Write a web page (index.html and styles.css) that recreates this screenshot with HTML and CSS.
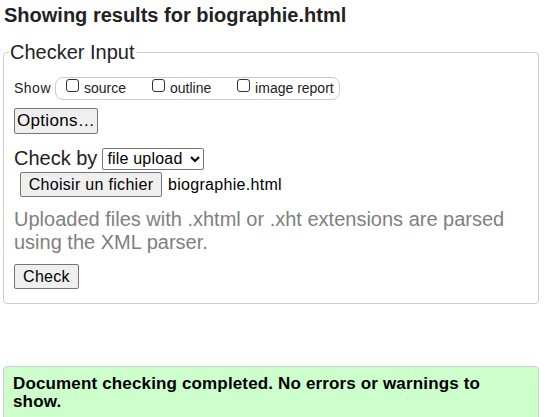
FILE: index.html
```html
<!DOCTYPE html>
<html lang="en">
<head>
<meta charset="utf-8">
<title>Showing results for biographie.html</title>
<link rel="stylesheet" href="styles.css">
</head>
<body>
<h2 class="title">Showing results for biographie.html</h2>
<fieldset class="checker">
  <legend class="checker-legend">Checker Input</legend>
  <div class="show-row">
    <span class="show-label">Show</span>
    <span class="show-box">
      <label class="opt"><input type="checkbox" class="cb">source</label>
      <label class="opt"><input type="checkbox" class="cb">outline</label>
      <label class="opt"><input type="checkbox" class="cb">image report</label>
    </span>
  </div>
  <div class="options-row"><button class="btn btn-options">Options…</button></div>
  <div class="checkby-row">
    <span class="checkby-label">Check by</span>
    <select class="sel"><option>file upload</option></select>
  </div>
  <div class="file-row">
    <button class="btn btn-file">Choisir un fichier</button>
    <span class="file-name">biographie.html</span>
  </div>
  <p class="note">Uploaded files with .xhtml or .xht extensions are parsed using the XML parser.</p>
  <div class="check-row"><button class="btn btn-check">Check</button></div>
</fieldset>
<div class="result">Document checking completed. No errors or warnings to show.</div>
</body>
</html>
```
FILE: styles.css
```css
html, body {
  margin: 0;
  padding: 0;
  background: #fff;
}
body {
  font-family: "Liberation Sans", Arial, sans-serif;
  color: #222;
  padding: 4px 6px 0 3px;
}
.title {
  font-size: 20px;
  font-weight: bold;
  margin: 0;
  padding: 0 0 0 1px;
  line-height: 23px;
  color: #222;
}
.checker {
  margin: 14px 0 0 0;
  padding: 0 10px 14px 10px;
  border: 1px solid #ccc;
  border-radius: 4px;
  min-width: 0;
}
.checker-legend {
  font-size: 20px;
  padding: 0 1px;
  margin-left: -5px;
  line-height: 23px;
  color: #222;
}
.show-row {
  display: flex;
  align-items: center;
  margin-top: 13px;
  height: 23px;
  font-size: 14px;
  line-height: 21px;
}
.show-label {
  margin-right: 4px;
  letter-spacing: 0.5px;
}
.show-box {
  display: block;
  border: 1px solid #ccc;
  border-radius: 8px;
  height: 21px;
  padding: 0 5px 0 10px;
  white-space: nowrap;
}
.opt {
  margin-right: 22px;
  color: #222;
}
.opt:last-child { margin-right: 0; }
.cb {
  -webkit-appearance: none;
  appearance: none;
  box-sizing: border-box;
  display: inline-block;
  margin: 0 5px 1px 0;
  width: 13px;
  height: 13px;
  border: 1px solid #333;
  border-radius: 3px;
  background: #fff;
  vertical-align: baseline;
}
.options-row {
  margin-top: 8px;
  height: 26px;
}
.btn {
  font-family: "Liberation Sans", Arial, sans-serif;
  font-size: 16px;
  color: #000;
  background: #efefef;
  border: 1px solid #767676;
  border-radius: 2px;
  padding: 0;
  height: 25px;
  letter-spacing: 0.3px;
}
.btn-options {
  width: 84px;
  height: 26px;
  font-size: 17px;
}
.checkby-row {
  display: flex;
  align-items: center;
  margin-top: 13px;
  height: 23px;
  font-size: 20px;
  line-height: 23px;
}
.checkby-label {
  margin-right: 5px;
}
.sel {
  font-family: "Liberation Sans", Arial, sans-serif;
  font-size: 16px;
  width: 102px;
  height: 22px;
  border: 1px solid #767676;
  border-radius: 2px;
  color: #000;
  background: #fff;
  letter-spacing: 0.2px;
}
.file-row {
  display: flex;
  align-items: center;
  margin-top: 2px;
  padding-left: 6px;
  height: 25px;
}
.btn-file {
  width: 142px;
}
.file-name {
  margin-left: 6px;
  font-size: 16px;
  color: #000;
  letter-spacing: 0.3px;
}
.note {
  margin: 11px 0 0 0;
  font-size: 20px;
  line-height: 23px;
  color: #808080;
}
.check-row {
  margin-top: 10px;
  height: 25px;
}
.btn-check {
  width: 65px;
}
.result {
  margin-top: 62px;
  border: 1px solid #ccc;
  border-radius: 4px;
  background: #ccffcc;
  padding: 8px 9px 20px 9px;
  font-size: 17px;
  font-weight: bold;
  line-height: 18px;
  letter-spacing: 0.15px;
  color: #000;
}
```
